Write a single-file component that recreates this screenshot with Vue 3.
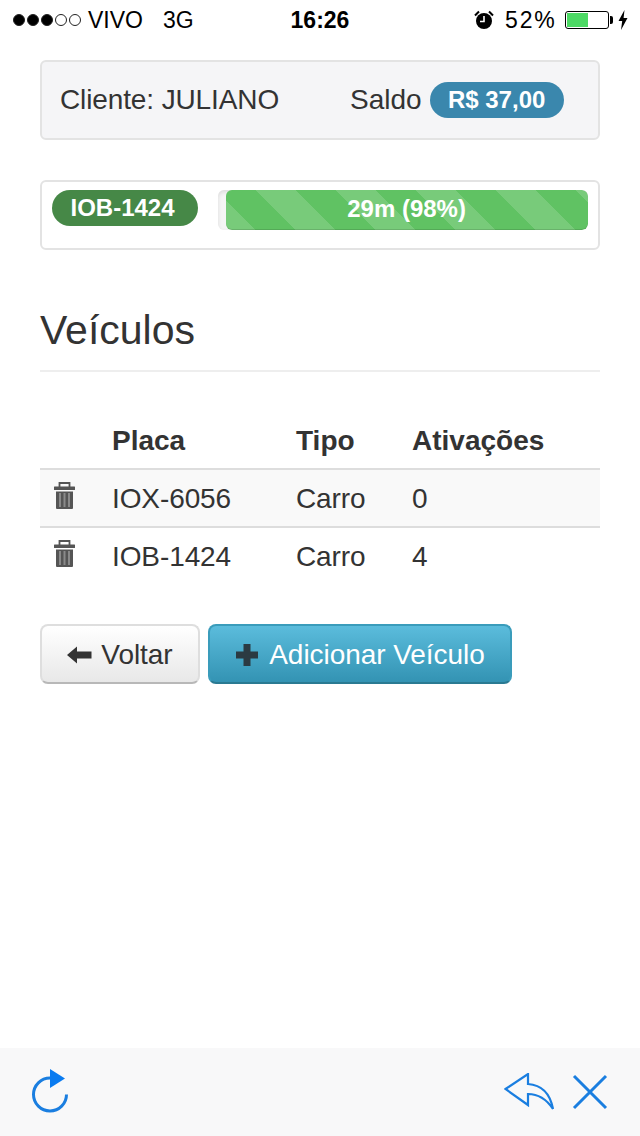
<template>
  <div class="screen">
    <div class="status-bar">
      <div class="status-left">
        <span class="signal">
          <i v-for="n in 5" :key="n" class="dot" :class="{ on: n <= 3 }"></i>
        </span>
        <span class="carrier">VIVO</span>
        <span class="net">3G</span>
      </div>
      <div class="status-time">16:26</div>
      <div class="status-right">
        <svg class="alarm" width="20" height="20" viewBox="0 0 20 20">
          <circle cx="10" cy="11" r="8" fill="#000" />
          <path d="M10 6v5.500H6" fill="none" stroke="#fff" stroke-width="1.600" />
          <path d="M1 5.500 L5 1.500 M15 1.500 L19 5.500" stroke="#000" stroke-width="2" />
        </svg>
        <span class="pct">52%</span>
        <span class="battery"><span class="battery-fill"></span></span>
        <span class="battery-tip"></span>
        <svg class="bolt" width="10" height="20" viewBox="0 0 10 20">
          <path d="M6.500 0 L0.500 11 H4.200 L3 20 L9.500 8 H5.600 Z" fill="#000" />
        </svg>
      </div>
    </div>

    <main class="content">
      <div class="well client">
        <span class="client-name">Cliente: JULIANO</span>
        <span class="balance">Saldo <span class="badge balance-badge">R$ 37,00</span></span>
      </div>

      <div class="well active">
        <span class="badge plate-badge">IOB-1424</span>
        <div class="progress">
          <div class="progress-bar" :style="{ width: percent + '%' }">29m (98%)</div>
        </div>
      </div>

      <h2 class="page-title">Veículos</h2>

      <table class="vehicles">
        <thead>
          <tr>
            <th class="col-icon"></th>
            <th class="col-plate">Placa</th>
            <th class="col-type">Tipo</th>
            <th>Ativações</th>
          </tr>
        </thead>
        <tbody>
          <tr v-for="v in vehicles" :key="v.plate">
            <td class="col-icon">
              <svg class="trash" width="22" height="28" viewBox="0 0 22 28">
                <path d="M5.500 5 V1 H15.500 V5" fill="none" stroke="#555" stroke-width="1.800" />
                <rect x="0" y="4.500" width="21" height="3.500" rx="0.500" fill="#555" />
                <path d="M2 9.500 H19 V26 a1 1 0 0 1 -1 1 H3 A1 1 0 0 1 2 26 Z" fill="#555" />
                <path d="M6 11 V25 M10.500 11 V25 M15 11 V25" stroke="#8a8a8a" stroke-width="2" />
              </svg>
            </td>
            <td>{{ v.plate }}</td>
            <td>{{ v.type }}</td>
            <td>{{ v.count }}</td>
          </tr>
        </tbody>
      </table>

      <div class="actions">
        <button class="btn btn-default">
          <svg width="25" height="20" viewBox="0 0 25 20">
            <path d="M0 10 L10 1.500 V6.500 H24.500 V13.500 H10 V18.500 Z" fill="#333" />
          </svg>
          Voltar
        </button>
        <button class="btn btn-info">
          <svg width="24" height="24" viewBox="0 0 24 24">
            <path d="M8.500 1 H15.500 V8.500 H23 V15.500 H15.500 V23 H8.500 V15.500 H1 V8.500 H8.500 Z" fill="#2b3a42" />
          </svg>
          Adicionar Veículo
        </button>
      </div>
    </main>

    <footer class="toolbar">
      <svg width="40" height="46" viewBox="0 0 40 46">
        <path d="M35.500 25.500 A16.500 16.500 0 1 1 19 9" fill="none" stroke="#1a7ee0" stroke-width="3" />
        <path d="M19 0 L34 9.500 L19 19 Z" fill="#0a7bf0" />
      </svg>
      <div class="toolbar-right">
        <svg width="50" height="38" viewBox="0 0 50 38">
          <path d="M1.500 16 L24 1 V11 C38 12 46 20 49 36 C43 27 35 21 24 21 V32 Z" fill="none" stroke="#1a7ee0" stroke-width="2.200" />
        </svg>
        <svg width="36" height="36" viewBox="0 0 36 36">
          <path d="M2 2 L34 34 M34 2 L2 34" stroke="#1a7ee0" stroke-width="3" />
        </svg>
      </div>
    </footer>
  </div>
</template>

<script setup>
const percent = 97.8

const vehicles = [
  { plate: 'IOX-6056', type: 'Carro', count: 0 },
  { plate: 'IOB-1424', type: 'Carro', count: 4 }
]
</script>

<style>
html, body {
  margin: 0;
  background: #fff;
}
</style>

<style scoped>
.screen {
  width: 640px;
  height: 1136px;
  display: flex;
  flex-direction: column;
  font-family: "Liberation Sans", Arial, sans-serif;
  color: #333;
  font-size: 28px;
  background: #fff;
  overflow: hidden;
}

.status-bar {
  height: 40px;
  display: grid;
  grid-template-columns: 1fr auto 1fr;
  align-items: center;
  padding: 0 12px 0 13px;
  color: #000;
  font-size: 23px;
  flex-shrink: 0;
}

.status-left {
  display: flex;
  align-items: center;
}

.signal {
  display: flex;
  gap: 2px;
  margin-right: 7px;
}

.dot {
  width: 12px;
  height: 12px;
  box-sizing: border-box;
  border-radius: 50%;
  border: 1px solid #222;
}

.dot.on {
  background: #000;
}

.net {
  margin-left: 20px;
}

.status-time {
  font-weight: bold;
  margin-left: -1px;
}

.status-right {
  display: flex;
  align-items: center;
  justify-content: flex-end;
}

.pct {
  margin-left: 11px;
  margin-right: 8px;
  letter-spacing: 1.8px;
}

.battery {
  width: 40px;
  height: 14px;
  border: 1px solid #000;
  border-radius: 3px;
  padding: 1px;
  display: block;
  box-sizing: content-box;
}

.battery-fill {
  display: block;
  width: 21px;
  height: 100%;
  background: #4cd964;
}

.battery-tip {
  width: 3px;
  height: 8px;
  background: #000;
  margin-left: 1.500px;
  border-radius: 0 2px 2px 0;
}

.bolt {
  margin-left: 5px;
}

.content {
  flex: 1;
  padding: 20px 40px 0;
}

.well {
  box-sizing: border-box;
  border: 2px solid #e3e3e3;
  border-radius: 6px;
  display: flex;
}

.client {
  height: 80px;
  align-items: center;
  background: #f5f5f7;
  padding: 0 18px;
}

.client-name {
  width: 290px;
  letter-spacing: -0.12px;
}

.balance {
  display: flex;
  align-items: center;
  gap: 8px;
}

.badge {
  color: #fff;
  font-weight: bold;
  font-size: 24px;
  border-radius: 18px;
  height: 36px;
  display: inline-flex;
  align-items: center;
  justify-content: center;
  box-sizing: border-box;
}

.balance-badge {
  width: 134px;
  background: #3a87ad;
}

.active {
  height: 70px;
  margin-top: 40px;
  padding: 8px 10px 0;
  background: #fff;
  gap: 20px;
}

.plate-badge {
  width: 146px;
  padding-right: 5px;
  background: #468847;
}

.progress {
  flex: 1;
  height: 40px;
  display: flex;
  justify-content: flex-end;
  background: #f5f5f5;
  border-radius: 6px;
  overflow: hidden;
  box-shadow: inset 0 2px 4px rgba(0, 0, 0, 0.1);
}

.progress-bar {
  height: 100%;
  box-sizing: border-box;
  color: #fff;
  font-size: 24px;
  font-weight: bold;
  line-height: 38px;
  text-align: center;
  padding-right: 1px;
  border-radius: 6px;
  background-color: #60c263;
  background-image: linear-gradient(45deg,
    rgba(255, 255, 255, 0.15) 25%, transparent 25%,
    transparent 50%, rgba(255, 255, 255, 0.15) 50%,
    rgba(255, 255, 255, 0.15) 75%, transparent 75%);
  background-size: 80px 80px;
  background-position: 30px 0;
  box-shadow: inset 0 -1px 0 rgba(0, 0, 0, 0.12);
}

.page-title {
  margin: 57px 0 0;
  padding-bottom: 17px;
  font-size: 41px;
  line-height: 46px;
  font-weight: normal;
  color: #333;
  border-bottom: 2px solid #eee;
}

.vehicles {
  width: 100%;
  margin-top: 40px;
  border-collapse: collapse;
  table-layout: fixed;
}

.vehicles th {
  text-align: left;
  font-weight: bold;
  height: 57px;
  box-sizing: border-box;
  padding: 2px 0 0;
  border-bottom: 2px solid #ddd;
}

.vehicles td {
  height: 58px;
  box-sizing: border-box;
  padding: 2px 0 0;
  letter-spacing: -0.1px;
  border-bottom: 2px solid #ddd;
}

.vehicles tbody tr:first-child {
  background: #f9f9f9;
}

.vehicles tbody tr:last-child td {
  height: 57px;
  border-bottom: 0;
}

.col-icon {
  width: 72px;
}

.col-plate {
  width: 184px;
}

.col-type {
  width: 116px;
}

.trash {
  display: block;
  margin: -7px 0 0 14px;
}

.actions {
  display: flex;
  gap: 8px;
  margin-top: 40px;
}

.btn {
  height: 60px;
  box-sizing: border-box;
  border-radius: 8px;
  font-family: inherit;
  font-size: 28px;
  letter-spacing: -0.05px;
  display: flex;
  align-items: center;
  justify-content: center;
  padding: 2px 0 0;
}

.btn-default {
  width: 160px;
  gap: 9px;
  color: #333;
  border: 2px solid #dedede;
  border-bottom-color: #b8b8b8;
  background: linear-gradient(#fff, #e8e8e8);
}

.btn-info {
  width: 304px;
  gap: 10px;
  color: #fff;
  border: 2px solid #3a9cbb;
  border-bottom-color: #2a7a92;
  background: linear-gradient(#5bbcdc, #3393b3);
}

.toolbar {
  height: 88px;
  background: #f8f8f9;
  display: flex;
  align-items: center;
  justify-content: space-between;
  padding: 0 32px 0 31px;
  flex-shrink: 0;
}

.toolbar-right {
  display: flex;
  align-items: center;
  gap: 18px;
}
</style>
